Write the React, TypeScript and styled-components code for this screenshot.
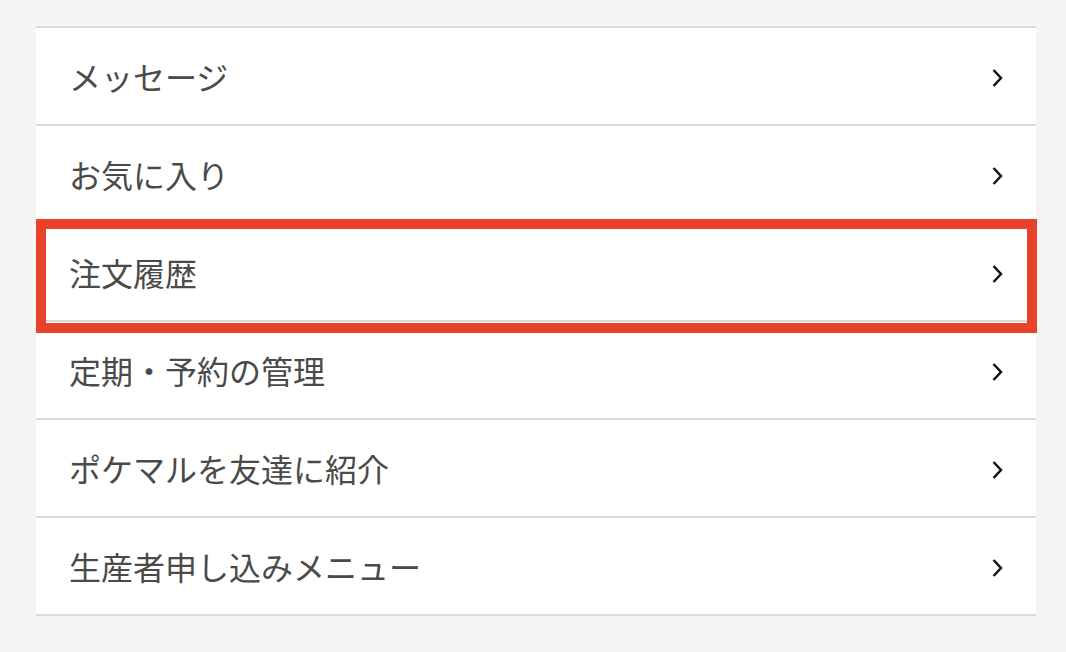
import React from "react";
import styled, { createGlobalStyle } from "styled-components";

const Global = createGlobalStyle`
  html, body {
    margin: 0;
    padding: 0;
    background: #f5f5f5;
  }
  body {
    font-family: "Noto Sans CJK JP", "Noto Sans", sans-serif;
  }
`;

const Page = styled.div`
  width: 1066px;
  height: 652px;
  padding-top: 26px;
  box-sizing: border-box;
  background: #f5f5f5;
`;

const Menu = styled.ul`
  list-style: none;
  margin: 0 0 0 36px;
  padding: 0;
  width: 1000px;
  background: #ffffff;
  border-top: 2px solid #d9d9d9;
`;

const Row = styled.li`
  position: relative;
  display: flex;
  align-items: center;
  justify-content: space-between;
  height: 98px;
  box-sizing: border-box;
  padding: 0 33px 0 33px;
  border-bottom: 2px solid #d9d9d9;
  cursor: pointer;
`;

const Label = styled.span`
  font-size: 32px;
  line-height: 1;
  color: #4a4a4a;
  letter-spacing: 0;
`;

const Chevron = styled.svg`
  width: 12px;
  height: 20px;
  margin-top: 4px;
  flex: none;
`;

const Highlight = styled.div`
  position: absolute;
  left: 0;
  top: -5px;
  width: 1001px;
  height: 114px;
  box-sizing: border-box;
  border: 10px solid #e9412a;
  pointer-events: none;
`;

const items = [
  "メッセージ",
  "お気に入り",
  "注文履歴",
  "定期・予約の管理",
  "ポケマルを友達に紹介",
  "生産者申し込みメニュー",
];

export default function App() {
  return (
    <Page>
      <Global />
      <Menu>
        {items.map((label, i) => (
          <Row key={label}>
            <Label>{label}</Label>
            <Chevron viewBox="0 0 12 20" aria-hidden="true">
              <polyline
                points="2.5,2 10,10 2.5,18"
                fill="none"
                stroke="#111"
                strokeWidth="2.5"
                strokeLinecap="butt"
                strokeLinejoin="miter"
              />
            </Chevron>
            {i === 2 && <Highlight />}
          </Row>
        ))}
      </Menu>
    </Page>
  );
}
